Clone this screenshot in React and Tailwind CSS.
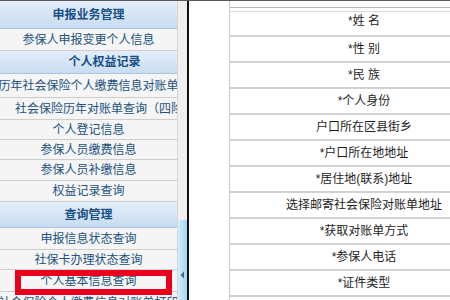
import React from 'react';

const FONT = { fontFamily: '"Liberation Sans", "Noto Sans CJK SC", sans-serif' };

// left menu rows: kind, label, row height (incl. border), extra classes
const menu = [
  ['head', '申报业务管理', 'h-[28px]', ''],
  ['item', '参保人申报变更个人信息', 'h-[22px]', ''],
  ['head', '个人权益记录', 'h-[23px]', 'pl-[32px]'],
  ['item', '历年社会保险个人缴费信息对账单', 'h-[24px]', ''],
  ['item', '社会保险历年对账单查询（四险种）', 'h-[22px]', 'justify-start pl-[15px]'],
  ['item', '个人登记信息', 'h-[20px]', ''],
  ['item', '参保人员缴费信息', 'h-[20px]', ''],
  ['item', '参保人员补缴信息', 'h-[21px]', ''],
  ['item', '权益记录查询', 'h-[21px]', ''],
  ['head', '查询管理', 'h-[26px]', ''],
  ['item', '申报信息状态查询', 'h-[22px]', ''],
  ['item', '社保卡办理状态查询', 'h-[20px]', ''],
  ['item', '个人基本信息查询', 'h-[22px]', ''],
  ['item', '社会保险个人缴费信息对账单打印', 'h-[22px]', ''],
];

const fields = [
  '*姓 名',
  '*性 别',
  '*民 族',
  '*个人身份',
  '户口所在区县街乡',
  '*户口所在地地址',
  '*居住地(联系)地址',
  '选择邮寄社会保险对账单地址',
  '*获取对账单方式',
  '*参保人电话',
  '*证件类型',
];

function MenuRow({ kind, label, h, extra }) {
  if (kind === 'head') {
    return (
      <div
        className={`${h} box-border flex items-center justify-center overflow-hidden whitespace-nowrap border-b border-[#a9c6e2] bg-gradient-to-b from-[#e4eefa] to-[#c8dcf1] text-[12px] font-bold text-[#174f86] ${extra}`}
      >
        {label}
      </div>
    );
  }
  return (
    <div
      className={`${h} box-border flex items-center justify-center overflow-hidden whitespace-nowrap border-b border-[#cdcdcd] bg-[#f5f5f5] text-[12px] text-[#22527f] ${extra}`}
    >
      {label}
    </div>
  );
}

export default function App() {
  return (
    <div className="h-[300px] w-[450px] overflow-hidden bg-white" style={FONT}>
      <div className="h-px bg-[#5a5a5a]" />
      <div className="flex h-[299px]">
        {/* left menu */}
        <div className="relative w-[177px] shrink-0 overflow-hidden bg-[#f5f5f5]">
          {menu.map(([kind, label, h, extra]) => (
            <MenuRow key={label} kind={kind} label={label} h={h} extra={extra} />
          ))}
          <div className="absolute left-[15px] top-[269px] h-[25px] w-[157px] border-[6px] border-[#e8001c]" />
        </div>

        {/* collapse strip */}
        <div className="flex w-[10px] shrink-0 flex-col border-l border-[#d6d6d6] bg-[#efefef]">
          <div className="h-[219px]" />
          <div className="flex flex-1 items-center bg-gradient-to-r from-[#d3eefb] to-[#9fd6f2] pt-[30px]">
            <svg width="8" height="8" viewBox="0 0 8 8" className="ml-[1px]">
              <path d="M5 0.5 L1.5 4 L5 7.5 Z" fill="#3d6a8c" />
            </svg>
          </div>
        </div>
        <div className="w-[2px] shrink-0 bg-[#111]" />

        {/* right content */}
        <div className="relative flex-1 overflow-hidden bg-white">
          <div className="ml-[40px] h-full w-[400px] border-l border-[#c9c9c9] text-[12px] text-[#1e1e1e]">
            <div className="h-[6px]" />
            <div className="h-[5px] border-y border-t-[#bdbdbd] border-b-[#dcdcdc]" />
            {fields.map((f, i) => (
              <div
                key={f}
                className={`${i === 0 ? 'h-[25px] pb-[5px]' : 'h-[26px]'} box-border flex items-center border-b-2 border-[#d2d2d2]`}
              >
                <div className="flex w-[268px] justify-center whitespace-nowrap">{f}</div>
              </div>
            ))}
          </div>
        </div>
      </div>
    </div>
  );
}
